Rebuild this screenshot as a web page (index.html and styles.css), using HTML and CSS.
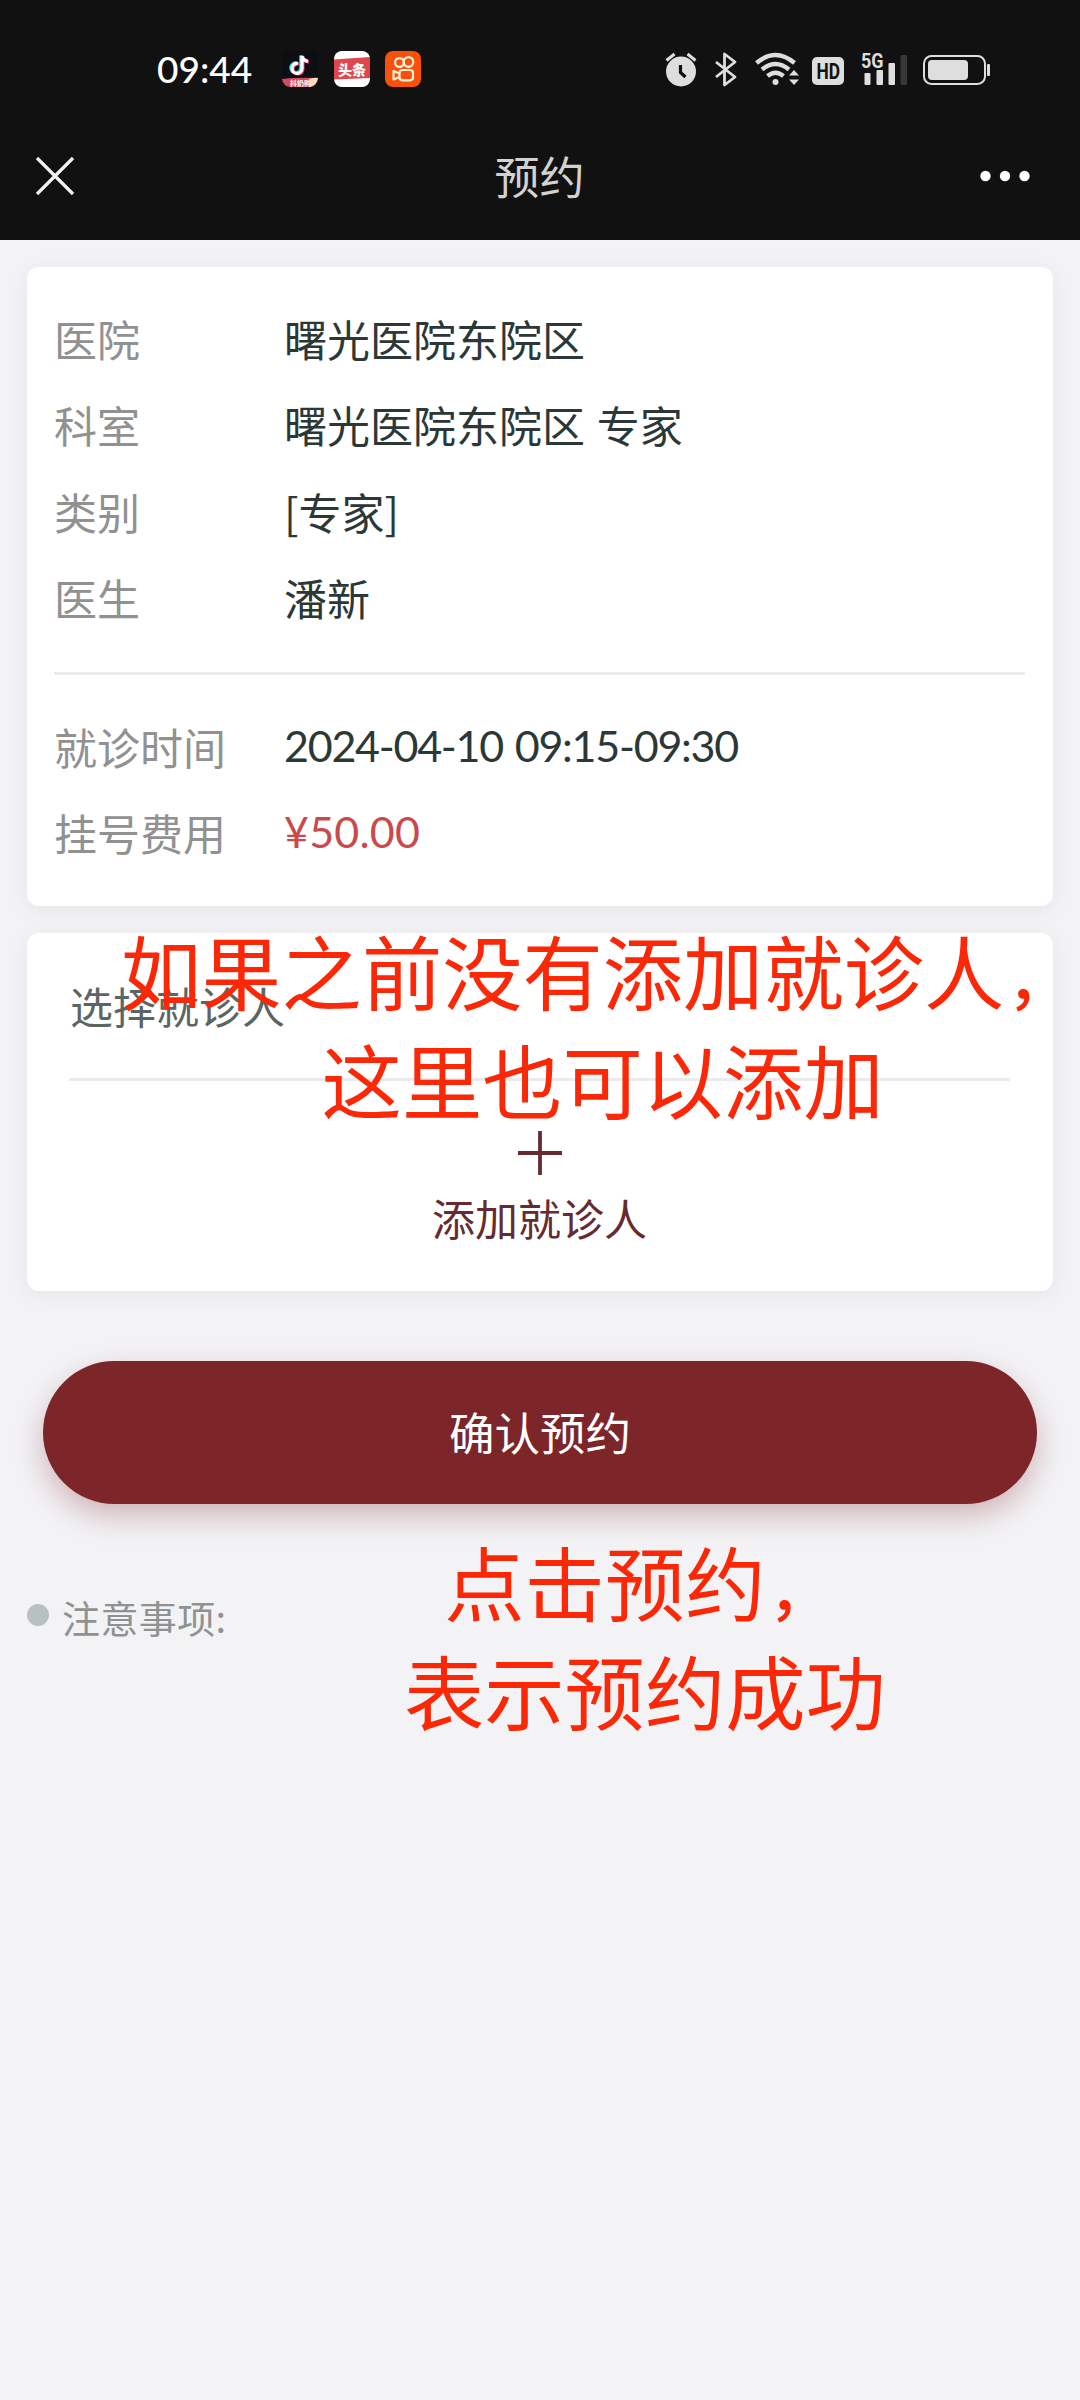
FILE: index.html
```html
<!DOCTYPE html>
<html lang="zh-CN">
<head>
<meta charset="utf-8">
<title>预约</title>
<link rel="stylesheet" href="styles.css">
</head>
<body>
<div class="screen">
  <header class="top">
    <div class="status">
      <span class="time">09:44</span>
      <div class="apps">
        <svg width="36" height="36" viewBox="0 0 36 36">
          <rect width="36" height="36" rx="8" fill="#0d0e14"/>
          <g fill="none" stroke-width="3.2">
            <path d="M16 12.500a5 5 0 1 0 4 5V5c.6 3 2.700 5 6 5.200" stroke="#35d6dc" transform="translate(-1.200 -.6)"/>
            <path d="M16 12.500a5 5 0 1 0 4 5V5c.6 3 2.700 5 6 5.200" stroke="#e8476a" transform="translate(.9 .6)"/>
            <path d="M16 12.500a5 5 0 1 0 4 5V5c.6 3 2.700 5 6 5.200" stroke="#fff"/>
          </g>
          <path d="M0 28q14-2 36-1-1 9-9 9H8q-7-1-8-8z" fill="#d24a5c"/>
          <path d="M27 28q6-2 9-1-1 7-8 9z" fill="#ffd9bd"/>
          <text x="8" y="34.500" class="tiny">抖奶购</text>
        </svg>
        <svg width="36" height="36" viewBox="0 0 36 36">
          <rect width="36" height="36" rx="8" fill="#fff"/>
          <path d="M0 8.500 36 6v21L0 28.500z" fill="#e0464e"/>
          <text x="4" y="24" class="news">头条</text>
        </svg>
        <svg width="36" height="36" viewBox="0 0 36 36">
          <rect width="36" height="36" rx="8" fill="#f9500b"/>
          <g fill="none" stroke="#fff3dc" stroke-width="2.200">
            <circle cx="14.500" cy="11.500" r="4.400"/>
            <circle cx="23.500" cy="11" r="4.800"/>
            <rect x="14.500" y="19" width="13.500" height="10.300" rx="3"/>
            <path d="m14.500 22.500-6-2.500v8.500l6-2.500" stroke-linejoin="round"/>
          </g>
        </svg>
      </div>
      <svg class="indicators" width="330" height="36" viewBox="0 0 330 36">
        <g fill="#dedede">
          <circle cx="16" cy="20.500" r="15"/>
          <path d="m1.500 9.500 8-6.500M30.500 9.500l-8-6.500" stroke="#dedede" stroke-width="3"/>
          <path d="M15.500 14v7.500l5 4.500" fill="none" stroke="#111" stroke-width="3.200"/>
          <path d="m51 11 19 15-10.500 8V3L70 11 51 26" fill="none" stroke="#dedede" stroke-width="2.800" stroke-linejoin="round"/>
          <g fill="none" stroke="#dedede" stroke-width="4.400">
            <path d="M91.500 12q19-16 38 0M97 18.500q13.500-11 27 0M102.500 25q8-6.500 16 0"/>
          </g>
          <circle cx="110.500" cy="31" r="3"/>
          <path d="m124 24.500 5-5.500 5 5.500zM124 28.500h10l-5 5.500z"/>
          <rect x="147" y="6" width="32" height="28" rx="5"/>
          <text x="151.500" y="27.500" class="hd" textLength="23.500" lengthAdjust="spacingAndGlyphs">HD</text>
          <text x="196" y="17" class="net" textLength="22.500" lengthAdjust="spacingAndGlyphs">5G</text>
          <rect x="199.500" y="22" width="6" height="12" rx="1"/>
          <rect x="211.500" y="19" width="6.500" height="15" rx="1"/>
          <rect x="223.500" y="12" width="6.500" height="22" rx="1"/>
          <rect x="235.500" y="4" width="6.500" height="30" rx="1" fill="#373737"/>
          <rect x="259" y="5" width="61" height="28" rx="7.500" fill="none" stroke="#dedede" stroke-width="2"/>
          <rect x="263" y="9" width="40" height="20" rx="4"/>
          <rect x="322" y="13" width="3" height="12" rx="1"/>
        </g>
      </svg>
    </div>
    <nav class="nav">
      <svg width="38" height="38" viewBox="0 0 38 38"><path d="m1 1 36 36M37 1 1 37" stroke="#f2f2f2" stroke-width="3.200"/></svg>
      <h1 class="title">预约</h1>
      <svg class="more" width="50" height="12" viewBox="0 0 50 12" fill="#fff"><circle cx="5.500" cy="6" r="5.200"/><circle cx="25" cy="6" r="5.200"/><circle cx="44.500" cy="6" r="5.200"/></svg>
    </nav>
  </header>

  <main class="content">
    <section class="card info">
      <dl class="rows">
        <dt>医院</dt><dd>曙光医院东院区</dd>
        <dt>科室</dt><dd>曙光医院东院区 专家</dd>
        <dt>类别</dt><dd>[专家]</dd>
        <dt>医生</dt><dd>潘新</dd>
      </dl>
      <hr class="rule">
      <dl class="rows">
        <dt>就诊时间</dt><dd class="latin date">2024-04-10 09:15-09:30</dd>
        <dt>挂号费用</dt><dd class="latin price">¥50.00</dd>
      </dl>
    </section>

    <section class="card patient">
      <h2 class="heading">选择就诊人</h2>
      <hr class="rule">
      <div class="add">
        <svg width="44" height="44" viewBox="0 0 44 44"><path d="M0 22h44M22 0v44" stroke="#662b31" stroke-width="3.800"/></svg>
        <span>添加就诊人</span>
      </div>
      <p class="note note-add">如果之前没有添加就诊人<span class="comma">，</span><br>这里也可以添加</p>
    </section>

    <button class="confirm">确认预约</button>

    <section class="remarks">
      <i class="dot"></i><span>注意事项:</span>
      <p class="note note-confirm">点击预约<span class="comma">，</span><br>表示预约成功</p>
    </section>
  </main>
</div>
</body>
</html>
```
FILE: styles.css
```css
* { box-sizing: border-box; margin: 0; padding: 0; }

body {
  background: #f3f3f6;
  font-family: "Noto Sans CJK SC", sans-serif;
  font-size: 43px;
  color: #2b3836;
}

.screen { width: 1080px; height: 2400px; overflow: hidden; }

svg { display: block; flex: none; overflow: visible; }

/* Status bar and title bar */
.top { height: 240px; background: #111; }

.status {
  display: flex;
  align-items: center;
  height: 137px;
  padding: 0 85px 0 157px;
}

.time {
  width: 125px;
  font: 500 37px/44px Lato, sans-serif;
  color: #fff;
  white-space: nowrap;
}

.apps { display: flex; gap: 15.5px; }
.indicators { margin-left: auto; }
.tiny { font-size: 7px; font-weight: 700; fill: #fff; }
.news { font-size: 14px; font-weight: 900; fill: #fff; }
.hd { font: 700 22px Roboto, sans-serif; fill: #111; }
.net { font: 700 20px Roboto, sans-serif; }

.nav {
  display: grid;
  grid-template-columns: 1fr auto 1fr;
  align-items: center;
  height: 77px;
  padding: 0 50px 0 36px;
}

.title {
  margin-left: 13px;
  font-size: 45px;
  font-weight: 400;
  line-height: 60px;
  color: #d2d2d2;
}

.more { justify-self: end; }

/* Cards */
.content { padding: 27px 27px 0; }

.card {
  background: #fff;
  border-radius: 12px;
  box-shadow: 0 4px 24px rgba(40, 40, 50, .06);
}

.info { height: 639px; padding: 28px 28px 0 27px; }

.rows {
  display: grid;
  grid-template-columns: 230px 1fr;
  grid-auto-rows: 86.400px;
  line-height: 86.400px;
  word-spacing: 2px;
}

.rows dt { color: #919191; }

.rule { height: 3px; border: 0; background: #ebebeb; }

.info .rule { margin: 31px 0 28px; }

.latin { font-family: Lato, sans-serif; }
.date { letter-spacing: -1.250px; }
.price { letter-spacing: .2px; color: #ca4a4c; }

.patient { position: relative; height: 358px; margin-top: 27px; padding: 29px 43px 0 42px; }

.heading { padding-left: 1px; font-size: 43px; font-weight: 400; line-height: 86px; color: #5b6562; }

.patient .rule { margin-top: 30px; }

.add {
  display: flex;
  flex-direction: column;
  align-items: center;
  gap: 11px;
  padding-top: 50px;
  line-height: 62px;
  color: #662b31;
}

/* Callouts laid over the form */
.note {
  position: absolute;
  font-size: 80.3px;
  line-height: 109px;
  text-align: center;
  white-space: nowrap;
  color: #fb2706;
}

.comma {
  display: inline-block;
  width: 80px;
  padding-left: 3px;
  font-size: 62px;
  font-weight: 500;
  line-height: 80px;
  text-align: left;
}

.note-add { left: 94px; top: -18px; }

.confirm {
  display: block;
  width: 994px;
  height: 143px;
  margin: 70px auto 0;
  padding-bottom: 3px;
  border: 0;
  border-radius: 72px;
  background: #7d2629;
  box-shadow: 0 12px 30px rgba(125, 38, 41, .3);
  font: 400 45.5px/60px "Noto Sans CJK SC", sans-serif;
  color: #fff;
}

.remarks {
  position: relative;
  display: flex;
  align-items: center;
  gap: 13px;
  height: 60px;
  margin-top: 82px;
  font-size: 38px;
  letter-spacing: .4px;
  color: #8f9292;
}

.dot { width: 22px; height: 22px; margin-top: -3px; border-radius: 50%; background: #b9c1c0; }

.note-confirm { left: 377px; top: -60px; letter-spacing: 0; }
```
